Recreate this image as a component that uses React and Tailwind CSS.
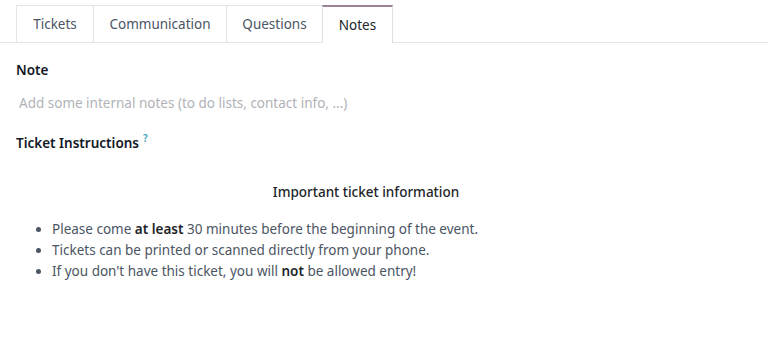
import React from 'react';

const tabs = [
  { label: 'Tickets', w: 'w-[77px]' },
  { label: 'Communication', w: 'w-[133px]' },
  { label: 'Questions', w: 'w-[96px]' },
  { label: 'Notes', w: 'w-[71px]' },
];

export default function App() {
  const active = 'Notes';
  return (
    <div
      className="w-[768px] h-[346px] bg-white text-[13.5px] text-[#374151] overflow-hidden"
      style={{ fontFamily: '"Noto Sans", "Open Sans", sans-serif' }}
    >
      {/* Tabs */}
      <div className="pt-[5px] border-b border-[#e5e5e5] flex pl-4">
        {tabs.map((t) => (
          <div
            key={t.label}
            className={
              t.label === active
                ? `${t.w} h-[38px] -mb-px flex items-center justify-center border-x border-t-2 border-x-[#e0e0e0] border-t-[#9a8396] bg-white text-[#212529]`
                : `${t.w} h-[37px] flex items-center justify-center border-t border-l border-[#e5e5e5] text-[#4b5563]`
            }
          >
            {t.label}
          </div>
        ))}
      </div>

      {/* Content */}
      <div className="px-4 pt-[15px]">
        <div className="font-semibold text-[#111827] leading-[24px]">Note</div>
        <div className="mt-[11px] pl-[3px] text-[#b0b3b8] leading-[20px]">
          Add some internal notes (to do lists, contact info, ...)
        </div>

        <div className="mt-[18px] font-semibold text-[#111827] leading-[24px]">
          Ticket Instructions
          <span className="relative -top-[6px] ml-[4px] text-[10px] text-[#3b9fc0] font-semibold">?</span>
        </div>

        <div className="w-[700px] mt-[24px] text-center text-[#212529] font-medium leading-[24px]">
          Important ticket information
        </div>

        <ul className="mt-[15px] list-disc pl-[36px] text-[#4b5563] leading-[21px]">
          <li>
            Please come <b className="font-semibold text-[#212529]">at least</b> 30 minutes before the beginning of the event.
          </li>
          <li>Tickets can be printed or scanned directly from your phone.</li>
          <li>
            If you don't have this ticket, you will <b className="font-semibold text-[#212529]">not</b> be allowed entry!
          </li>
        </ul>
      </div>
    </div>
  );
}
